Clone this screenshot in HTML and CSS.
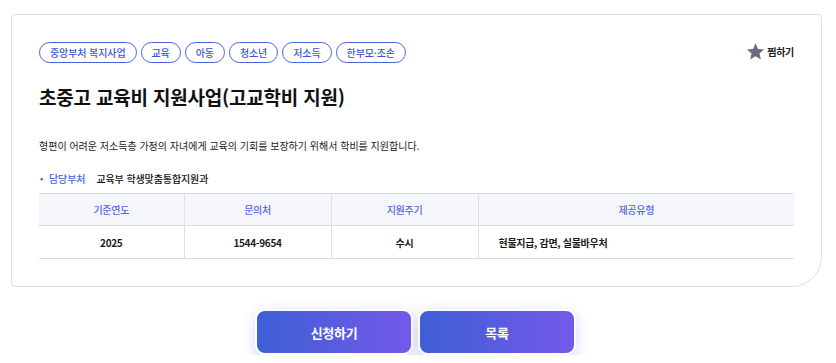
FILE: index.html
```html
<!DOCTYPE html>
<html lang="ko">
<head>
<meta charset="utf-8">
<link rel="stylesheet" href="styles.css">
</head>
<body>
<div class="card">
  <div class="top">
    <ul class="tags">
      <li class="tag">중앙부처 복지사업</li>
      <li class="tag">교육</li>
      <li class="tag">아동</li>
      <li class="tag">청소년</li>
      <li class="tag">저소득</li>
      <li class="tag">한부모·조손</li>
    </ul>
    <button class="fav">
      <svg class="star" viewBox="0 0 24 24" width="19" height="19"><path d="M12 1.5l3.1 7.2 7.8.7-5.9 5.1 1.8 7.6L12 18.1 5.2 22.1 7 14.5 1.1 9.4l7.8-.7z" fill="#6a6d82"/></svg>
      <span>찜하기</span>
    </button>
  </div>
  <h1 class="title">초중고 교육비 지원사업(고교학비 지원)</h1>
  <p class="desc">형편이 어려운 저소득층 가정의 자녀에게 교육의 기회를 보장하기 위해서 학비를 지원합니다.</p>
  <div class="dept"><span class="dot">•</span><span class="dept-label">담당부처</span><span class="dept-value">교육부 학생맞춤통합지원과</span></div>
  <table class="info">
    <thead>
      <tr><th class="c1">기준연도</th><th class="c2">문의처</th><th class="c3">지원주기</th><th class="c4">제공유형</th></tr>
    </thead>
    <tbody>
      <tr><td>2025</td><td>1544-9654</td><td>수시</td><td class="left">현물지급, 감면, 실물바우처</td></tr>
    </tbody>
  </table>
</div>
<div class="actions">
  <button class="btn">신청하기</button>
  <button class="btn">목록</button>
</div>
</body>
</html>
```
FILE: styles.css
```css
* { box-sizing: border-box; }
html, body { margin: 0; padding: 0; background: #fff; }
body {
  font-family: "Noto Sans CJK KR", "Noto Sans", sans-serif;
  color: #111;
  width: 836px;
}
.card {
  margin: 14px 0 0 11px;
  width: 811px;
  border: 1px solid #dedede;
  border-radius: 4px 4px 30px 4px;
  padding: 27px 27px 27px 27px;
}
.top {
  display: flex;
  justify-content: space-between;
  align-items: flex-start;
}
.tags {
  list-style: none;
  margin: 0;
  padding: 0;
  display: flex;
  gap: 4px;
}
.tag {
  height: 21px;
  border: 1px solid #4a62dc;
  border-radius: 11px;
  padding: 0 10px;
  font-size: 10px;
  letter-spacing: -0.1px;
  line-height: 19px;
  color: #3e55cf;
  font-weight: 500;
}
.fav {
  display: flex;
  align-items: center;
  gap: 2px;
  border: 0;
  background: none;
  padding: 0;
  margin-top: 0;
  font-family: inherit;
  font-size: 10px;
  font-weight: 700;
  color: #222;
  letter-spacing: -0.3px;
  cursor: pointer;
}
.title {
  margin: 22px 0 0;
  font-size: 19px;
  line-height: 24px;
  font-weight: 700;
  letter-spacing: -0.2px;
  color: #111;
}
.desc {
  margin: 29px 0 0;
  font-size: 10px;
  line-height: 16px;
  color: #222;
  letter-spacing: 0;
}
.dept {
  margin-top: 17px;
  display: flex;
  align-items: center;
  font-size: 10px;
  line-height: 16px;
  letter-spacing: -0.1px;
  font-weight: 500;
}
.dot { color: #4a62dc; width: 10px; padding-left: 1px; font-size: 9px; }
.dept-label { color: #4a62dc; margin-right: 11px; }
.dept-value { color: #111; }
.info {
  margin-top: 6px;
  width: 100%;
  border-collapse: collapse;
  table-layout: fixed;
  font-size: 10px;
  letter-spacing: -0.3px;
}
.info th, .info td {
  border-left: 1px solid #e0e0e4;
  text-align: center;
}
.info th:first-child, .info td:first-child { border-left: 0; }
.info thead tr { border-top: 1px solid #dcdce0; border-bottom: 1px solid #dcdce0; }
.info tbody tr { border-bottom: 1px solid #dcdce0; }
.info th {
  height: 32px;
  background: #f4f6fb;
  color: #5468e0;
  font-weight: 500;
  padding: 0;
}
.info td {
  height: 33px;
  font-weight: 700;
  color: #1a1a1a;
  padding: 0;
}
.info td.left { text-align: left; padding-left: 20px; }
.c1 { width: 145px; }
.c2 { width: 147px; }
.c3 { width: 147px; }
.actions {
  display: flex;
  justify-content: center;
  gap: 5px;
  margin-top: 22px;
  padding-right: 5px;
}
.btn {
  width: 158px;
  height: 46px;
  border: 2px solid #fff;
  border-radius: 10px;
  background: linear-gradient(90deg, #3d5fd6 0%, #7559ea 100%);
  color: #fff;
  font-family: inherit;
  font-size: 13px;
  font-weight: 700;
  letter-spacing: -0.3px;
  box-shadow: 0 4px 14px rgba(110, 100, 220, 0.28);
  cursor: pointer;
}
```
